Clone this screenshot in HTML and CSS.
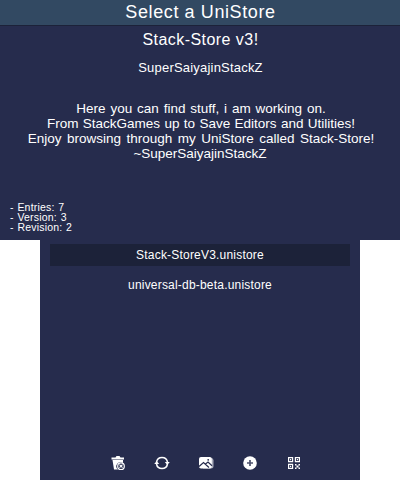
FILE: index.html
```
<!DOCTYPE html>
<html lang="en">
<head>
<meta charset="utf-8">
<title>Select a UniStore</title>
<link rel="stylesheet" href="styles.css">
</head>
<body>
<section class="top">
  <header class="title">Select a UniStore</header>
  <h1 class="name">Stack-Store v3!</h1>
  <p class="author">SuperSaiyajinStackZ</p>
  <div class="desc">
    <p class="d1">Here you can find stuff, i am working on.</p>
    <p class="d2">From StackGames up to Save Editors and Utilities!</p>
    <p class="d3">Enjoy browsing through my UniStore called Stack-Store!</p>
    <p class="d4">~SuperSaiyajinStackZ</p>
  </div>
  <ul class="meta">
    <li>- Entries: 7</li>
    <li>- Version: 3</li>
    <li>- Revision: 2</li>
  </ul>
</section>
<section class="bottom">
  <div class="item selected">Stack-StoreV3.unistore</div>
  <div class="item second">universal-db-beta.unistore</div>
  <nav class="tools">
    <svg viewBox="0 0 16 16"><path fill="#fff" d="M1.500 2.500h4L6.500 1h3l1 1.500h3.500v2h-12.500zM2.500 5h10.500v3A4 4 0 0 0 8 14.500H4z"/><circle cx="11" cy="11.200" r="3.300" fill="#262c4d" stroke="#fff" stroke-width="1.200"/><path stroke="#fff" stroke-width="1.100" d="M9.500 9.700l3 3m0-3l-3 3"/></svg>
    <svg viewBox="0 0 16 16"><g fill="none" stroke="#fff" stroke-width="1.500"><path d="M2.500 7A5.600 5.600 0 0 1 13.500 7M13.500 9A5.600 5.600 0 0 1 2.500 9"/></g><path fill="#fff" d="M10.800 7h5l-2.500 3zM.2 9h5L2.700 6z"/></svg>
    <svg viewBox="0 0 16 16"><path fill="#a9acbb" d="M5 3h8.500Q15.500 3 15.500 5.500V11q0 2.500-2.500 2.500H5z"/><rect x="1" y="2" width="12.800" height="11.500" rx="2" fill="#fff"/><path fill="none" stroke="#262c4d" stroke-width="1.200" d="M1 11.500l4.500-4 5.500 5M7.500 9l2.500-2 4 3.800"/><circle cx="10.200" cy="4.800" r=".9" fill="#262c4d"/></svg>
    <svg viewBox="0 0 16 16"><circle cx="8" cy="8" r="6.800" fill="#fff"/><path stroke="#4d526d" stroke-width="1.700" d="M8 5v6M5 8h6"/></svg>
    <svg viewBox="0 0 16 16"><g fill="none" stroke="#fff" stroke-width="1.200"><path d="M2.600 2.600h4v4h-4zM9.400 2.600h4v4h-4zM2.600 9.400h4v4h-4z"/></g><path fill="#fff" d="M4 4h1.200v1.200H4zM10.800 4H12v1.200h-1.200zM4 10.800h1.200V12H4zM9 9h1.500v1.500H9zM12.500 9H14v1.500h-1.500zM10.500 10.500h2v2h-2zM9 12.500h1.500V14H9zM12.500 12.500H14V14h-1.500z"/></svg>
  </nav>
</section>
</body>
</html>
```
FILE: styles.css
```
* { box-sizing: border-box; margin: 0; padding: 0; }
body {
  width: 400px;
  height: 480px;
  background: #fff;
  color: #fff;
  font-family: "Liberation Sans", sans-serif;
  white-space: nowrap;
  overflow: hidden;
}
.top { height: 240px; background: #262c4d; text-align: center; }
.title { height: 26px; padding-left: 1px; background: #324962; border-bottom: 1px solid #1c2239; font-size: 18px; line-height: 25px; letter-spacing: 0.6px; }
.name { margin-top: 4px; padding-left: 1px; font-size: 16px; font-weight: 400; line-height: 20px; letter-spacing: 0.45px; }
.author { margin-top: 10px; padding-left: 1px; font-size: 13px; line-height: 16px; letter-spacing: 0.2px; }
.desc { margin-top: 25px; padding-left: 2px; font-size: 13.500px; line-height: 15px; }
.d1 { word-spacing: 1.1px; }
.d2 { word-spacing: 0.6px; }
.d3 { word-spacing: 1.7px; }
.d4 { padding-right: 2px; }
.meta { margin: 41px 0 0 10px; list-style: none; text-align: left; font-size: 10.500px; line-height: 10px; letter-spacing: 0.2px; word-spacing: 0.6px; }
.bottom { display: flex; flex-direction: column; width: 320px; height: 240px; margin: 0 auto; padding: 4px 10px 9px; background: #262c4d; font-size: 12px; letter-spacing: 0.2px; text-align: center; }
.item { height: 22px; line-height: 23px; }
.selected { background: #1c2239; }
.second { margin-top: 8px; }
.tools { display: flex; justify-content: center; gap: 28px; margin-top: auto; padding-left: 12px; }
.tools svg { width: 16px; height: 16px; }
```
